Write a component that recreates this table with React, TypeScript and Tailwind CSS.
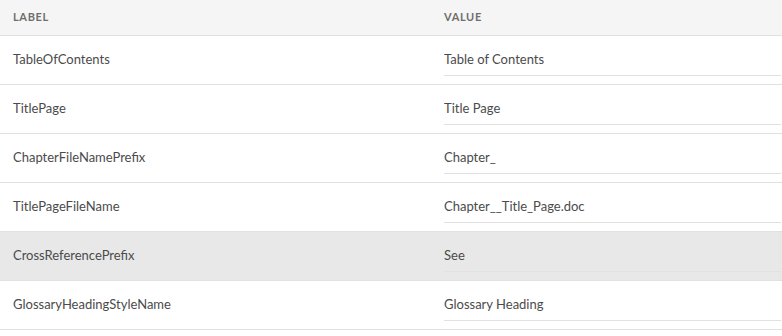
const rows = [
  { label: "TableOfContents", value: "Table of Contents" },
  { label: "TitlePage", value: "Title Page" },
  { label: "ChapterFileNamePrefix", value: "Chapter_" },
  { label: "TitlePageFileName", value: "Chapter__Title_Page.doc" },
  { label: "CrossReferencePrefix", value: "See" },
  { label: "GlossaryHeadingStyleName", value: "Glossary Heading" },
]

export default function App() {
  return (
    <div className="h-[336px] w-[782px] overflow-hidden bg-white font-['Lato',sans-serif] text-[13px] text-[#4b4b4b]">
      <div className="grid grid-cols-[432px_1fr] h-[36px] border-b border-[#e1e1e1] bg-[#f5f5f5] text-[11px] font-bold tracking-[0.06em] text-[#6e6e6e]">
        <div className="flex items-center pl-[13px]">LABEL</div>
        <div className="flex items-center pl-[12px]">VALUE</div>
      </div>
      {rows.map((row, i) => (
        <div
          key={row.label}
          className={`grid grid-cols-[432px_1fr] h-[49px] border-b border-[#e1e1e1] ${i === 4 ? "bg-[#e8e8e8]" : "bg-white"}`}
        >
          <div className="flex items-center pl-[13px]">{row.label}</div>
          <div className="flex items-center pl-[12px] pr-[1px]">
            <input
              readOnly
              value={row.value}
              className="h-[32px] w-full border-b border-[#e1e1e1] bg-transparent pb-[2px] text-[13px] text-[#4b4b4b] outline-none"
            />
          </div>
        </div>
      ))}
    </div>
  )
}
